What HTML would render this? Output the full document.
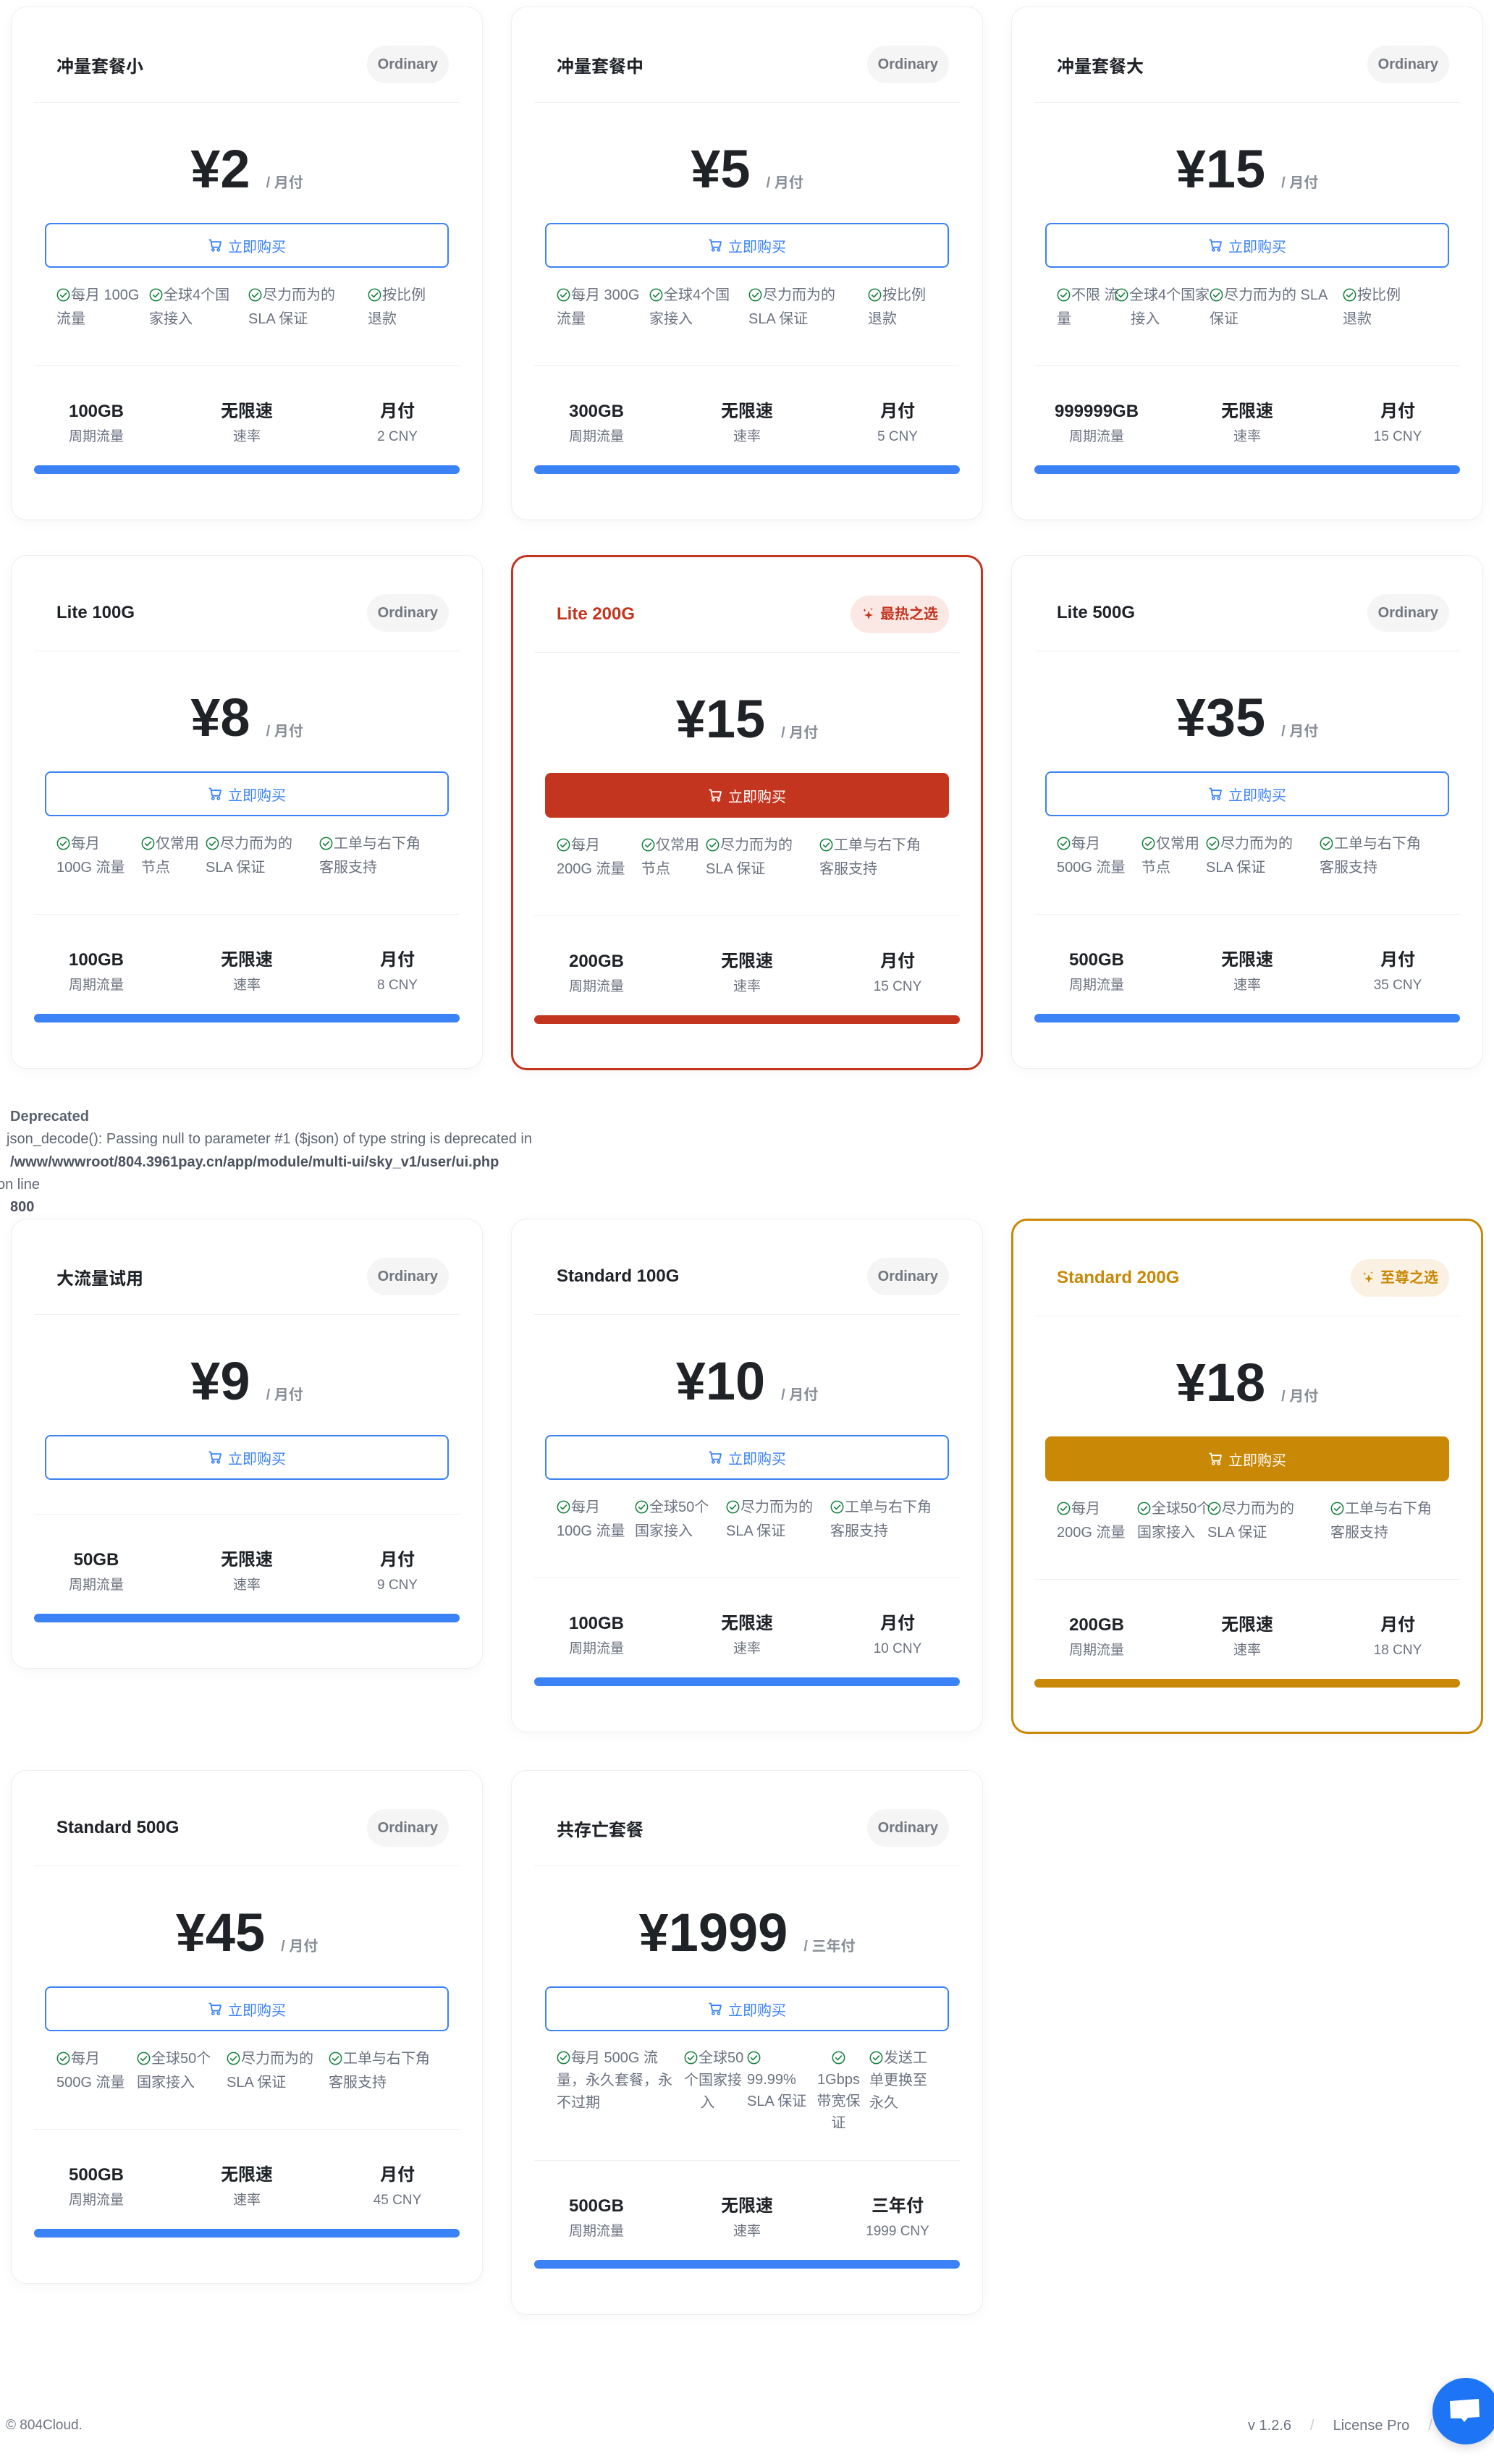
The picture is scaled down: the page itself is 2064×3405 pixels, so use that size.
<!DOCTYPE html>
<html><head><meta charset="utf-8"><style>
*{margin:0;padding:0}
body{width:2064px;height:3405px;position:relative;background:#fff;font-family:"Liberation Sans","Noto Sans CJK SC",sans-serif;overflow:hidden}
.card{position:absolute;width:652px;box-sizing:border-box;border:1px solid #eceef2;border-radius:22px;background:#fff;box-shadow:0 4px 18px rgba(0,0,0,.035);padding:0 31px 63px}
.card.red{border:3px solid #c4351f;padding:0 29px 61px}
.card.gold{border:3px solid #c98805;padding:0 29px 61px}
.hd{margin-top:27px;height:104px;display:flex;align-items:center;justify-content:space-between;padding:0 15px 0 31px;border-bottom:1px solid #eef0f3}
.t{font-size:24px;font-weight:700;color:#1f2328}
.red .t{color:#c4351f;font-weight:600}
.gold .t{color:#c98805;font-weight:600}
.bd{height:52px;padding:0 15px;border-radius:26px;background:#f5f5f6;color:#737880;font-size:20px;font-weight:600;line-height:52px;display:flex;align-items:center;gap:6px}
.red .bd{background:#fbe8e5;color:#c4351f;font-weight:700}
.gold .bd{background:#fbf1e3;color:#c98805;font-weight:700}
.pr{margin-top:56px;display:flex;justify-content:center;align-items:baseline;gap:22px;line-height:72px;height:72px}
.p{font-size:74px;font-weight:700;color:#1f2328}
.u{font-size:20px;font-weight:700;color:#8a9099}
.btn{margin:38px 15px 0;height:62px;box-sizing:border-box;border:2px solid #3b82f6;border-radius:8px;color:#3b82f6;display:flex;align-items:center;justify-content:center;font-size:20px;gap:8px}
.red .btn{background:#c4351f;border-color:#c4351f;color:#fff}
.gold .btn{background:#c98805;border-color:#c98805;color:#fff}
.ft{margin-top:22px;padding-left:31px;display:flex;font-size:20px;line-height:33px;color:#6b7280;white-space:nowrap}
.ft>div{flex:none}
.ck{display:inline-block;width:19px;height:19px;vertical-align:-3px;margin-right:1px}
.dv{border-top:1px solid #eef0f3;margin-top:47px}
.st{display:grid;grid-template-columns:repeat(3,208px);margin:47px -18px 0;text-align:center}
.st b{display:block;font-size:24px;line-height:32px;color:#1f2328}
.st span{display:block;margin-top:4px;font-size:19px;line-height:30px;color:#6b7280}
.bar{margin-top:24px;height:12px;border-radius:6px;background:#3b82f6}
.red .bar{background:#c4351f}
.gold .bar{background:#c98805}
.dep{position:absolute;font-size:20px;color:#5f6673;white-space:nowrap;line-height:30px}
</style></head><body>
<svg width="0" height="0" style="position:absolute"><defs>
<symbol id="ck" viewBox="0 0 20 20"><circle cx="10" cy="10" r="8.6" fill="none" stroke="#15803d" stroke-width="1.6"/><path d="M6 10.3l2.8 2.8L14.2 7.4" fill="none" stroke="#15803d" stroke-width="1.7" stroke-linecap="round" stroke-linejoin="round"/></symbol>
<symbol id="cart" viewBox="0 0 20 20"><path d="M1.5 2.5h2.6l2 10.2h10.2l1.7-7.5H5" fill="none" stroke="currentColor" stroke-width="1.8" stroke-linejoin="round"/><circle cx="7.3" cy="16.3" r="1.6" fill="none" stroke="currentColor" stroke-width="1.6"/><circle cx="14.8" cy="16.3" r="1.6" fill="none" stroke="currentColor" stroke-width="1.6"/></symbol>
<symbol id="sp" viewBox="0 0 20 20"><path d="M10 5l1.5 4.5L16 11l-4.5 1.5L10 17l-1.5-4.5L4 11l4.5-1.5z" fill="currentColor"/><path d="M4.5 2l.6 1.6 1.6.6-1.6.6-.6 1.6-.6-1.6-1.6-.6 1.6-.6zM14 1l.5 1.2 1.2.5-1.2.5-.5 1.2-.5-1.2-1.2-.5 1.2-.5z" fill="currentColor"/></symbol>
</defs></svg>

<!-- Row 1 -->
<div class="card" style="left:15px;top:9px">
<div class="hd"><span class="t">冲量套餐小</span><span class="bd">Ordinary</span></div>
<div class="pr"><span class="p">¥2</span><span class="u">/ 月付</span></div>
<div class="btn"><svg width="20" height="20"><use href="#cart"/></svg>立即购买</div>
<div class="ft"><div style="width:128px"><svg class="ck"><use href="#ck"/></svg>每月 100G<br>流量</div><div style="width:137px"><svg class="ck"><use href="#ck"/></svg>全球4个国<br>家接入</div><div style="width:165px"><svg class="ck"><use href="#ck"/></svg>尽力而为的<br>SLA 保证</div><div><svg class="ck"><use href="#ck"/></svg>按比例<br>退款</div></div>
<div class="dv"></div>
<div class="st"><div><b>100GB</b><span>周期流量</span></div><div><b>无限速</b><span>速率</span></div><div><b>月付</b><span>2 CNY</span></div></div>
<div class="bar"></div>
</div>

<div class="card" style="left:706px;top:9px">
<div class="hd"><span class="t">冲量套餐中</span><span class="bd">Ordinary</span></div>
<div class="pr"><span class="p">¥5</span><span class="u">/ 月付</span></div>
<div class="btn"><svg width="20" height="20"><use href="#cart"/></svg>立即购买</div>
<div class="ft"><div style="width:128px"><svg class="ck"><use href="#ck"/></svg>每月 300G<br>流量</div><div style="width:137px"><svg class="ck"><use href="#ck"/></svg>全球4个国<br>家接入</div><div style="width:165px"><svg class="ck"><use href="#ck"/></svg>尽力而为的<br>SLA 保证</div><div><svg class="ck"><use href="#ck"/></svg>按比例<br>退款</div></div>
<div class="dv"></div>
<div class="st"><div><b>300GB</b><span>周期流量</span></div><div><b>无限速</b><span>速率</span></div><div><b>月付</b><span>5 CNY</span></div></div>
<div class="bar"></div>
</div>

<div class="card" style="left:1397px;top:9px">
<div class="hd"><span class="t">冲量套餐大</span><span class="bd">Ordinary</span></div>
<div class="pr"><span class="p">¥15</span><span class="u">/ 月付</span></div>
<div class="btn"><svg width="20" height="20"><use href="#cart"/></svg>立即购买</div>
<div class="ft"><div style="width:54px"><svg class="ck"><use href="#ck"/></svg>不限 流<br>量</div><div style="width:157px;padding-left:26px;box-sizing:border-box"><svg class="ck"><use href="#ck"/></svg>全球4个国家<br>&nbsp;&nbsp;&nbsp;&nbsp;接入</div><div style="width:184px"><svg class="ck"><use href="#ck"/></svg>尽力而为的 SLA<br>保证</div><div><svg class="ck"><use href="#ck"/></svg>按比例<br>退款</div></div>
<div class="dv"></div>
<div class="st"><div><b>999999GB</b><span>周期流量</span></div><div><b>无限速</b><span>速率</span></div><div><b>月付</b><span>15 CNY</span></div></div>
<div class="bar"></div>
</div>

<!-- Row 2 -->
<div class="card" style="left:15px;top:767px">
<div class="hd"><span class="t" style="font-weight:600">Lite 100G</span><span class="bd">Ordinary</span></div>
<div class="pr"><span class="p">¥8</span><span class="u">/ 月付</span></div>
<div class="btn"><svg width="20" height="20"><use href="#cart"/></svg>立即购买</div>
<div class="ft"><div style="width:117px"><svg class="ck"><use href="#ck"/></svg>每月<br>100G 流量</div><div style="width:89px"><svg class="ck"><use href="#ck"/></svg>仅常用<br>节点</div><div style="width:157px"><svg class="ck"><use href="#ck"/></svg>尽力而为的<br>SLA 保证</div><div><svg class="ck"><use href="#ck"/></svg>工单与右下角<br>客服支持</div></div>
<div class="dv"></div>
<div class="st"><div><b>100GB</b><span>周期流量</span></div><div><b>无限速</b><span>速率</span></div><div><b>月付</b><span>8 CNY</span></div></div>
<div class="bar"></div>
</div>

<div class="card red" style="left:706px;top:767px">
<div class="hd"><span class="t">Lite 200G</span><span class="bd"><svg width="20" height="20"><use href="#sp"/></svg>最热之选</span></div>
<div class="pr"><span class="p">¥15</span><span class="u">/ 月付</span></div>
<div class="btn"><svg width="20" height="20"><use href="#cart"/></svg>立即购买</div>
<div class="ft"><div style="width:117px"><svg class="ck"><use href="#ck"/></svg>每月<br>200G 流量</div><div style="width:89px"><svg class="ck"><use href="#ck"/></svg>仅常用<br>节点</div><div style="width:157px"><svg class="ck"><use href="#ck"/></svg>尽力而为的<br>SLA 保证</div><div><svg class="ck"><use href="#ck"/></svg>工单与右下角<br>客服支持</div></div>
<div class="dv"></div>
<div class="st"><div><b>200GB</b><span>周期流量</span></div><div><b>无限速</b><span>速率</span></div><div><b>月付</b><span>15 CNY</span></div></div>
<div class="bar"></div>
</div>

<div class="card" style="left:1397px;top:767px">
<div class="hd"><span class="t" style="font-weight:600">Lite 500G</span><span class="bd">Ordinary</span></div>
<div class="pr"><span class="p">¥35</span><span class="u">/ 月付</span></div>
<div class="btn"><svg width="20" height="20"><use href="#cart"/></svg>立即购买</div>
<div class="ft"><div style="width:117px"><svg class="ck"><use href="#ck"/></svg>每月<br>500G 流量</div><div style="width:89px"><svg class="ck"><use href="#ck"/></svg>仅常用<br>节点</div><div style="width:157px"><svg class="ck"><use href="#ck"/></svg>尽力而为的<br>SLA 保证</div><div><svg class="ck"><use href="#ck"/></svg>工单与右下角<br>客服支持</div></div>
<div class="dv"></div>
<div class="st"><div><b>500GB</b><span>周期流量</span></div><div><b>无限速</b><span>速率</span></div><div><b>月付</b><span>35 CNY</span></div></div>
<div class="bar"></div>
</div>

<!-- Deprecated -->
<div class="dep" style="left:14px;top:1528px;font-weight:700;color:#5a6270">Deprecated</div>
<div class="dep" style="left:9px;top:1559px">json_decode(): Passing null to parameter #1 ($json) of type string is deprecated in</div>
<div class="dep" style="left:14px;top:1591px;font-weight:700;color:#4b5260">/www/wwwroot/804.3961pay.cn/app/module/multi-ui/sky_v1/user/ui.php</div>
<div class="dep" style="left:-4px;top:1622px">on line</div>
<div class="dep" style="left:14px;top:1653px;font-weight:700;color:#4b5260">800</div>

<!-- Row 3 -->
<div class="card" style="left:15px;top:1684px">
<div class="hd"><span class="t">大流量试用</span><span class="bd">Ordinary</span></div>
<div class="pr"><span class="p">¥9</span><span class="u">/ 月付</span></div>
<div class="btn"><svg width="20" height="20"><use href="#cart"/></svg>立即购买</div>
<div class="dv"></div>
<div class="st"><div><b>50GB</b><span>周期流量</span></div><div><b>无限速</b><span>速率</span></div><div><b>月付</b><span>9 CNY</span></div></div>
<div class="bar"></div>
</div>

<div class="card" style="left:706px;top:1684px">
<div class="hd"><span class="t" style="font-weight:600">Standard 100G</span><span class="bd">Ordinary</span></div>
<div class="pr"><span class="p">¥10</span><span class="u">/ 月付</span></div>
<div class="btn"><svg width="20" height="20"><use href="#cart"/></svg>立即购买</div>
<div class="ft"><div style="width:108px"><svg class="ck"><use href="#ck"/></svg>每月<br>100G 流量</div><div style="width:126px"><svg class="ck"><use href="#ck"/></svg>全球50个<br>国家接入</div><div style="width:144px"><svg class="ck"><use href="#ck"/></svg>尽力而为的<br>SLA 保证</div><div><svg class="ck"><use href="#ck"/></svg>工单与右下角<br>客服支持</div></div>
<div class="dv"></div>
<div class="st"><div><b>100GB</b><span>周期流量</span></div><div><b>无限速</b><span>速率</span></div><div><b>月付</b><span>10 CNY</span></div></div>
<div class="bar"></div>
</div>

<div class="card gold" style="left:1397px;top:1684px">
<div class="hd"><span class="t">Standard 200G</span><span class="bd"><svg width="20" height="20"><use href="#sp"/></svg>至尊之选</span></div>
<div class="pr"><span class="p">¥18</span><span class="u">/ 月付</span></div>
<div class="btn"><svg width="20" height="20"><use href="#cart"/></svg>立即购买</div>
<div class="ft"><div style="width:111px"><svg class="ck"><use href="#ck"/></svg>每月<br>200G 流量</div><div style="width:97px"><svg class="ck"><use href="#ck"/></svg>全球50个<br>国家接入</div><div style="width:170px"><svg class="ck"><use href="#ck"/></svg>尽力而为的<br>SLA 保证</div><div><svg class="ck"><use href="#ck"/></svg>工单与右下角<br>客服支持</div></div>
<div class="dv"></div>
<div class="st"><div><b>200GB</b><span>周期流量</span></div><div><b>无限速</b><span>速率</span></div><div><b>月付</b><span>18 CNY</span></div></div>
<div class="bar"></div>
</div>

<!-- Row 4 -->
<div class="card" style="left:15px;top:2446px">
<div class="hd"><span class="t" style="font-weight:600">Standard 500G</span><span class="bd">Ordinary</span></div>
<div class="pr"><span class="p">¥45</span><span class="u">/ 月付</span></div>
<div class="btn"><svg width="20" height="20"><use href="#cart"/></svg>立即购买</div>
<div class="ft"><div style="width:111px"><svg class="ck"><use href="#ck"/></svg>每月<br>500G 流量</div><div style="width:124px"><svg class="ck"><use href="#ck"/></svg>全球50个<br>国家接入</div><div style="width:141px"><svg class="ck"><use href="#ck"/></svg>尽力而为的<br>SLA 保证</div><div><svg class="ck"><use href="#ck"/></svg>工单与右下角<br>客服支持</div></div>
<div class="dv"></div>
<div class="st"><div><b>500GB</b><span>周期流量</span></div><div><b>无限速</b><span>速率</span></div><div><b>月付</b><span>45 CNY</span></div></div>
<div class="bar"></div>
</div>

<div class="card" style="left:706px;top:2446px">
<div class="hd"><span class="t">共存亡套餐</span><span class="bd">Ordinary</span></div>
<div class="pr"><span class="p">¥1999</span><span class="u">/ 三年付</span></div>
<div class="btn"><svg width="20" height="20"><use href="#cart"/></svg>立即购买</div>
<div class="ft" style="line-height:31px"><div style="width:176px"><svg class="ck"><use href="#ck"/></svg>每月 500G 流<br>量，永久套餐，永<br>不过期</div><div style="width:87px"><svg class="ck"><use href="#ck"/></svg>全球50<br>个国家接<br>&nbsp;&nbsp;&nbsp;&nbsp;入</div><div style="width:84px;line-height:30px"><svg class="ck"><use href="#ck"/></svg><br>99.99%<br>SLA 保证</div><div style="width:85px;line-height:30px;text-align:center"><svg class="ck"><use href="#ck"/></svg><br>1Gbps<br>带宽保<br>证</div><div><svg class="ck"><use href="#ck"/></svg>发送工<br>单更换至<br>永久</div></div>
<div class="dv" style="margin-top:36px"></div>
<div class="st"><div><b>500GB</b><span>周期流量</span></div><div><b>无限速</b><span>速率</span></div><div><b>三年付</b><span>1999 CNY</span></div></div>
<div class="bar"></div>
</div>

<!-- Footer -->
<div style="position:absolute;left:8px;top:3339px;font-size:19px;color:#6b7280;line-height:26px">© 804Cloud.</div>
<div style="position:absolute;left:1724px;top:3338px;font-size:20px;color:#6b7280;line-height:28px;white-space:nowrap">v 1.2.6<span style="color:#c7cbd1;margin:0 26px">/</span>License Pro<span style="color:#c7cbd1;margin-left:26px">/</span></div>
<div style="position:absolute;left:1979px;top:3286px;width:92px;height:92px;border-radius:50%;background:#1d74f5;box-shadow:0 4px 14px rgba(0,0,0,.15)">
<svg width="46" height="40" style="position:absolute;left:22px;top:26px" viewBox="0 0 46 40"><path d="M2 6L42 3 43 28 27 29 22 35 18 30 3 30Z" fill="#fff"/></svg>
</div>
</body></html>
